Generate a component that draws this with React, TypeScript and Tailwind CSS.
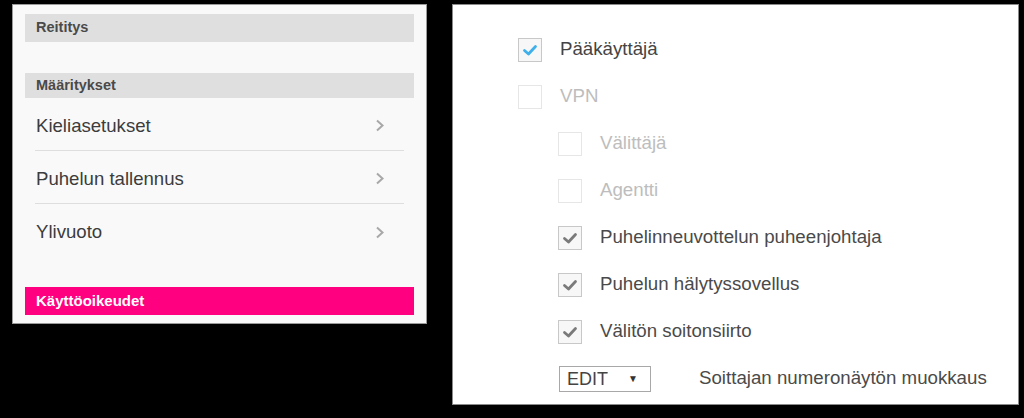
import React from "react";

const font = { fontFamily: '"Liberation Sans", Arial, sans-serif' };

function Chevron() {
  return (
    <svg width="10" height="13" viewBox="0 0 10 13" className="block">
      <path d="M2 1.5 L7.5 6.5 L2 11.5" fill="none" stroke="#a8a8a8" strokeWidth="2" />
    </svg>
  );
}

function Check({ color }: { color: string }) {
  return (
    <svg width="22" height="22" viewBox="0 0 22 22" className="block">
      <path d="M5.5 11.5 L9.5 15 L16.5 7.5" fill="none" stroke={color} strokeWidth="2.8" strokeLinecap="round" strokeLinejoin="round" />
    </svg>
  );
}

function Box({ checked, color, disabled }: { checked?: boolean; color?: string; disabled?: boolean }) {
  return (
    <div
      className={
        "w-[24px] h-[24px] flex items-center justify-center border " +
        (disabled ? "border-[#e6e6e6] bg-white" : "border-[#c8c8c8] bg-[#f7f7f7]")
      }
    >
      {checked ? <Check color={color || "#777"} /> : null}
    </div>
  );
}

function NavRow({ label, last }: { label: string; last?: boolean }) {
  return (
    <div
      className={
        "h-[53px] flex items-center justify-between pl-[1px] pr-[19px] pt-[3px] " +
        (last ? "" : "border-b border-[#dedede]")
      }
    >
      <span className="text-[18.6px] text-[#3c3c3c]">{label}</span>
      <Chevron />
    </div>
  );
}

function CbRow({
  level,
  label,
  checked,
  color,
  disabled,
  textColor,
}: {
  level: 1 | 2;
  label: string;
  checked?: boolean;
  color?: string;
  disabled?: boolean;
  textColor: string;
}) {
  return (
    <div className={"h-[47px] flex items-center " + (level === 1 ? "pl-[65px]" : "pl-[105px]")}>
      <Box checked={checked} color={color} disabled={disabled} />
      <span className={"ml-[18px] text-[18.7px] " + textColor}>{label}</span>
    </div>
  );
}

export default function App() {
  return (
    <div className="w-[1024px] h-[418px] bg-black flex items-start pt-[4px] pl-[12px] gap-[25px]" style={font}>
      {/* Left panel */}
      <div className="w-[415px] h-[320px] border border-[#9a9a9a] bg-[#f9f9f9] px-[12px] pt-[9px] pb-[8px] flex flex-col">
        <div className="h-[28px] bg-[#dfdfdf] flex items-center pl-[11px] text-[14.5px] font-bold text-[#4a4a4a]">
          Reititys
        </div>
        <div className="h-[31px]" />
        <div className="h-[26px] bg-[#dfdfdf] flex items-center pl-[11px] text-[14.5px] font-bold text-[#4a4a4a]">
          Määritykset
        </div>
        <div className="mx-[10px] flex flex-col">
          <NavRow label="Kieliasetukset" />
          <NavRow label="Puhelun tallennus" />
          <NavRow label="Ylivuoto" last />
        </div>
        <div className="h-[30px]" />
        <div className="h-[28px] bg-[#ff0080] flex items-center pl-[11px] text-[15px] font-bold text-white">
          Käyttöoikeudet
        </div>
      </div>

      {/* Right panel */}
      <div className="w-[567px] h-[401px] border border-[#8a8a8a] bg-white pt-[21px] flex flex-col">
        <CbRow level={1} label="Pääkäyttäjä" checked color="#3fb0ea" textColor="text-[#444]" />
        <CbRow level={1} label="VPN" disabled textColor="text-[#bdbdbd]" />
        <CbRow level={2} label="Välittäjä" disabled textColor="text-[#bdbdbd]" />
        <CbRow level={2} label="Agentti" disabled textColor="text-[#bdbdbd]" />
        <CbRow level={2} label="Puhelinneuvottelun puheenjohtaja" checked color="#7a7a7a" textColor="text-[#4a4a4a]" />
        <CbRow level={2} label="Puhelun hälytyssovellus" checked color="#7a7a7a" textColor="text-[#4a4a4a]" />
        <CbRow level={2} label="Välitön soitonsiirto" checked color="#7a7a7a" textColor="text-[#4a4a4a]" />
        <div className="h-[47px] flex items-center pl-[106px]">
          <div className="w-[92px] h-[26px] border border-[#a8a8a8] bg-white flex items-center pl-[7px] pr-[12px] justify-between">
            <span className="text-[18px] text-[#444] leading-none">EDIT</span>
            <span className="text-[10px] text-[#333] leading-none">▼</span>
          </div>
          <span className="ml-[48px] text-[18.7px] text-[#4a4a4a]">Soittajan numeronäytön muokkaus</span>
        </div>
      </div>
    </div>
  );
}
